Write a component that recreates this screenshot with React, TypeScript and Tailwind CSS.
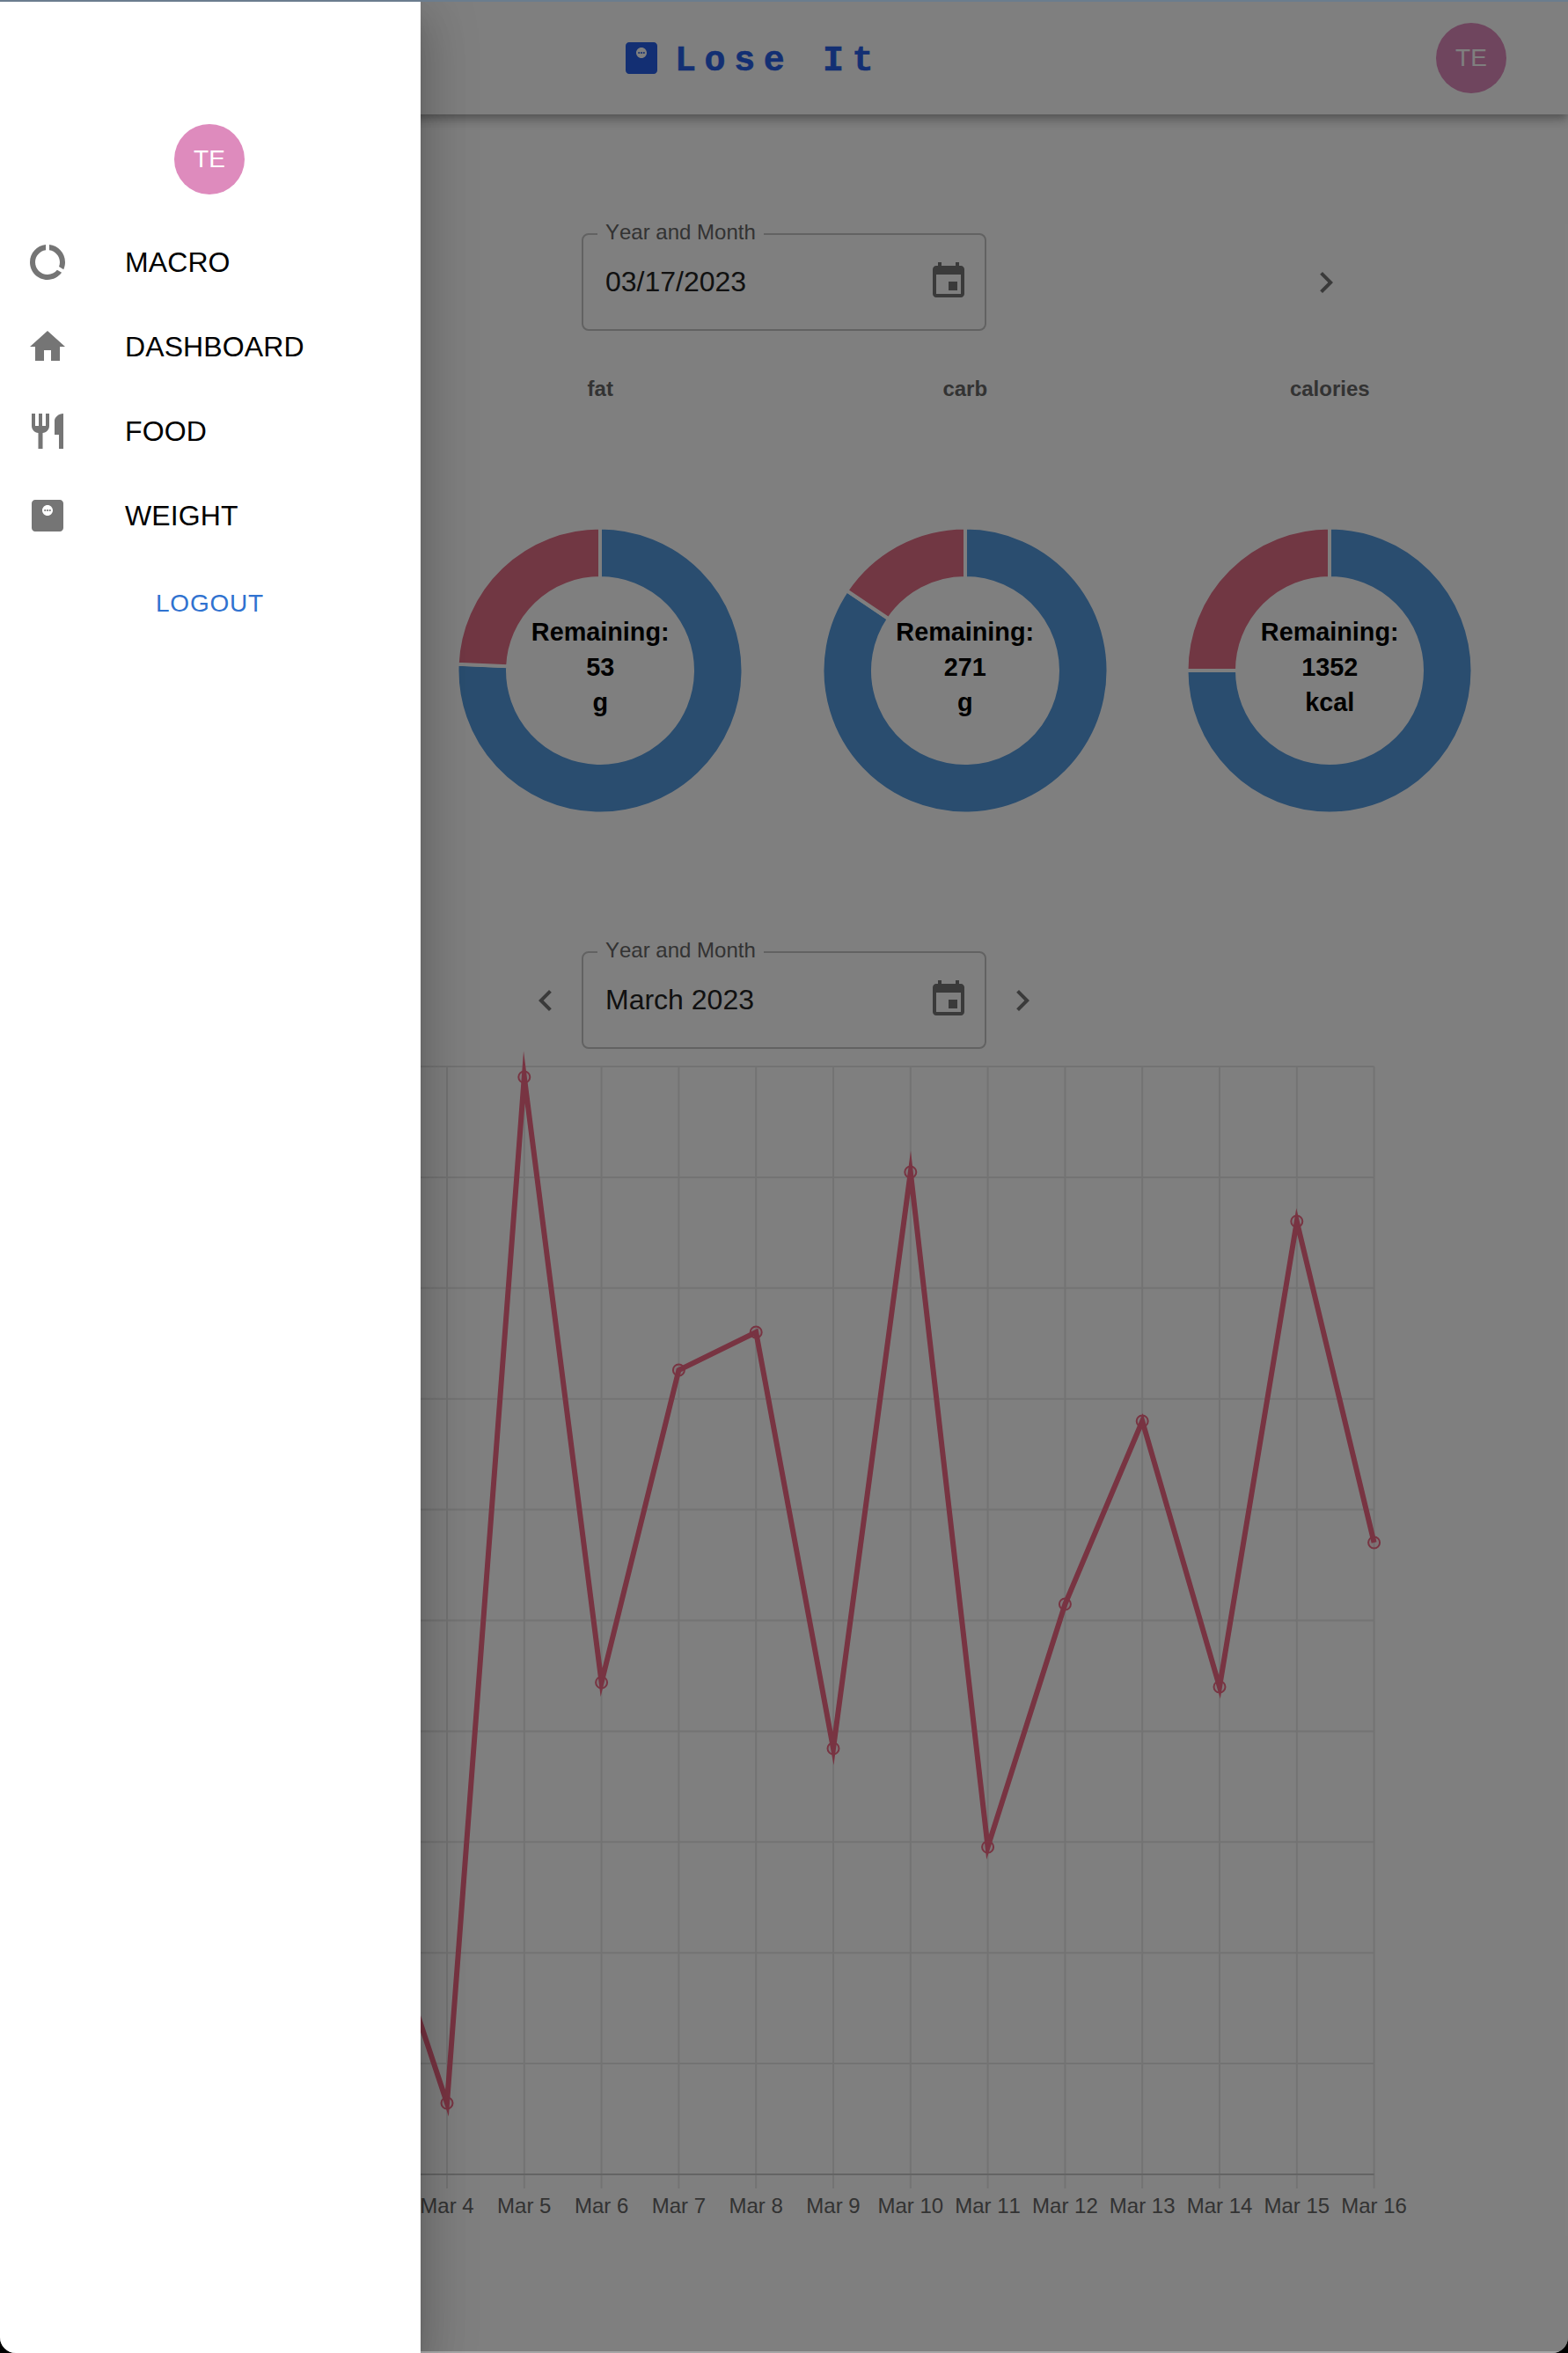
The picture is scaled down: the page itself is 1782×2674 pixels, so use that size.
import React from "react";

const EVENT = "M17 12h-5v5h5v-5zM16 1v2H8V1H6v2H5c-1.11 0-1.99.9-1.99 2L3 19c0 1.1.89 2 2 2h14c1.1 0 2-.9 2-2V5c0-1.1-.9-2-2-2h-1V1h-2zm3 18H5V8h14v11z";
const CHEVRON_R = "M10 6L8.59 7.41 13.17 12l-4.58 4.59L10 18l6-6z";
const CHEVRON_L = "M15.41 7.41L14 6l-6 6 6 6 1.41-1.41L10.83 12z";
const DATA_USAGE = "M13 2.05v3.03c3.39.49 6 3.39 6 6.92 0 .9-.18 1.75-.48 2.54l2.6 1.53c.56-1.24.88-2.62.88-4.07 0-5.18-3.95-9.45-9-9.95zM12 19c-3.87 0-7-3.13-7-7 0-3.53 2.61-6.43 6-6.92V2.05c-5.06.5-9 4.76-9 9.95 0 5.52 4.47 10 9.99 10 3.31 0 6.24-1.61 8.06-4.09l-2.6-1.53C16.17 17.98 14.21 19 12 19z";
const HOME = "M10 20v-6h4v6h5v-8h3L12 3 2 12h3v8z";
const RESTAURANT = "M11 9H9V2H7v7H5V2H3v7c0 2.12 1.66 3.84 3.75 3.97V22h2.5v-9.03C11.34 12.84 13 11.12 13 9V2h-2v7zm5-3v8h2.5v8H21V2c-2.76 0-5 2.24-5 4z";
const WEIGHT = "M5 3h14c1.1 0 2 .9 2 2v14c0 1.1-.9 2-2 2H5c-1.1 0-2-.9-2-2V5c0-1.1.9-2 2-2zm7 3c-1.66 0-3 1.34-3 3s1.34 3 3 3 3-1.34 3-3-1.34-3-3-3z";

function Icon({ d, className }: { d: string; className: string }) {
  return (
    <svg viewBox="0 0 24 24" className={className} fill="currentColor" fillRule="evenodd">
      <path d={d} />
    </svg>
  );
}

function WeightIcon({ className }: { className: string }) {
  return (
    <svg viewBox="0 0 24 24" className={className} fill="currentColor">
      <path d={WEIGHT} fillRule="evenodd" />
      <circle cx="10.6" cy="9" r="0.55" />
      <circle cx="12" cy="9" r="0.55" />
      <circle cx="13.4" cy="9" r="0.55" />
    </svg>
  );
}

function Picker({ value }: { value: string }) {
  return (
    <div className="relative flex h-[111px] w-[460px] shrink-0 items-start justify-between rounded-lg border-2 border-[#c4c4c4] pl-[25px] pr-[17px] pt-[29px]">
      <span className="absolute left-[16px] top-[-17px] bg-white px-[9px] text-[24px] leading-[28px] text-[#666666]">
        Year and Month
      </span>
      <span className="text-[32px] leading-[48px] text-[#222222]">{value}</span>
      <Icon d={EVENT} className="h-12 w-12 text-[#757575]" />
    </div>
  );
}

function polar(r: number, deg: number) {
  const a = (deg * Math.PI) / 180;
  return `${(165 + r * Math.sin(a)).toFixed(2)} ${(165 - r * Math.cos(a)).toFixed(2)}`;
}

function arc(from: number, to: number) {
  const R = 162.5;
  const r = 105;
  const large = to - from > 180 ? 1 : 0;
  return `M${polar(R, from)}A${R} ${R} 0 ${large} 1 ${polar(R, to)}L${polar(r, to)}A${r} ${r} 0 ${large} 0 ${polar(r, from)}Z`;
}

function Donut({ title, value, unit, deg }: { title: string; value: string; unit: string; deg: number }) {
  return (
    <div className="flex w-[414.5px] shrink-0 flex-col items-center">
      <div className="h-[28px] text-[24px] font-bold leading-[28px] text-[#666666]">{title}</div>
      <div className="relative mt-[141px] h-[330px] w-[330px]">
        <svg viewBox="0 0 330 330" className="h-[330px] w-[330px]">
          <path d={arc(0, deg)} fill="#549ade" stroke="#ffffff" strokeWidth="4" />
          <path d={arc(deg, 360)} fill="#e26e86" stroke="#ffffff" strokeWidth="4" />
        </svg>
        <div className="absolute inset-x-0 top-[101px] text-center text-[28.8px] font-bold leading-[40px] text-black">
          <div>Remaining:</div>
          <div>{value}</div>
          <div>{unit}</div>
        </div>
      </div>
    </div>
  );
}

const DAYS = [4, 5, 6, 7, 8, 9, 10, 11, 12, 13, 14, 15, 16];
const XS = DAYS.map((_, i) => 508 + 87.8 * i);
const VALUES = [2390, 1224, 1912, 1557, 1514, 1987, 1332, 2099, 1823, 1615, 1917, 1388, 1753];
const ROWS = [0, 1, 2, 3, 4, 5, 6, 7, 8, 9].map((i) => 1212 + 125.9 * i);

function Chart() {
  const line = "420,2125 " + XS.map((x, i) => `${x},${VALUES[i]}`).join(" ");
  const right = XS[XS.length - 1];
  return (
    <svg viewBox="0 1192 1782 1340" className="block h-[1340px] w-[1782px]">
      {ROWS.map((y) => (
        <line key={y} x1="420" x2={right} y1={y} y2={y} stroke="#e6e6e6" strokeWidth="2" />
      ))}
      {XS.map((x) => (
        <line key={x} x1={x} x2={x} y1="1212" y2="2487" stroke="#e6e6e6" strokeWidth="2" />
      ))}
      <line x1="420" x2={right} y1="2471" y2="2471" stroke="#c8c8c8" strokeWidth="2" />
      <polyline points={line} fill="none" stroke="#f06884" strokeWidth="6" strokeLinejoin="miter" strokeMiterlimit="10" />
      {XS.map((x, i) => (
        <circle key={x} cx={x} cy={VALUES[i]} r="6.5" fill="#f06884" fillOpacity="0.15" stroke="#f06884" strokeWidth="2" />
      ))}
      {XS.map((x, i) => (
        <text key={x} x={x} y="2514.5" textAnchor="middle" fontSize="24" fill="#666666">
          {`Mar ${DAYS[i]}`}
        </text>
      ))}
    </svg>
  );
}

function NavRow({ label, children }: { label: string; children: React.ReactNode }) {
  return (
    <div className="flex h-[96px] items-center pl-[30px]">
      {children}
      <span className="ml-[64px] text-[32px] tracking-[0.1px] text-black">{label}</span>
    </div>
  );
}

export default function App() {
  return (
    <div className="h-[2674px] w-[1782px] overflow-hidden bg-black font-['Liberation_Sans',Arial,sans-serif] [font-kerning:none]">
      <div className="relative h-[2674px] w-[1782px] overflow-hidden rounded-b-[18px] bg-white">
        <header className="flex h-[130px] items-center bg-white pl-[705px] pr-[70px] pt-[2px] shadow-[0_4px_8px_-2px_rgba(0,0,0,0.2),0_8px_10px_0_rgba(0,0,0,0.14),0_2px_20px_0_rgba(0,0,0,0.12)]">
          <WeightIcon className="h-12 w-12 text-[#265ee6]" />
          <span className="ml-[14px] pt-[7px] font-['Liberation_Mono',monospace] text-[40px] font-bold leading-[48px] tracking-[9.6px] text-[#265ee6] [-webkit-text-stroke:0.6px_#265ee6]">
            Lose It
          </span>
          <div className="ml-auto flex h-20 w-20 items-center justify-center rounded-full bg-[#de8bbd] text-[28px] text-white">
            TE
          </div>
        </header>

        <div className="ml-[661px] mt-[135px] flex items-center">
          <Picker value="03/17/2023" />
          <Icon d={CHEVRON_R} className="ml-[362px] h-12 w-12 text-[#757575]" />
        </div>

        <div className="ml-[475px] mt-[52px] flex">
          <Donut title="fat" value="53" unit="g" deg={272.6} />
          <Donut title="carb" value="271" unit="g" deg={304} />
          <Donut title="calories" value="1352" unit="kcal" deg={270} />
        </div>

        <div className="ml-[596px] mt-[154px] flex items-center">
          <Icon d={CHEVRON_L} className="h-12 w-12 text-[#757575]" />
          <div className="ml-[17px]">
            <Picker value="March 2023" />
          </div>
          <Icon d={CHEVRON_R} className="ml-[17px] h-12 w-12 text-[#757575]" />
        </div>

        <Chart />

        <div className="absolute inset-0 bg-black/50" />

        <aside className="absolute inset-y-0 left-0 w-[478px] bg-white pt-[141px] shadow-[0_16px_20px_-10px_rgba(0,0,0,0.2),0_32px_48px_4px_rgba(0,0,0,0.14),0_12px_60px_10px_rgba(0,0,0,0.12)]">
          <div className="ml-[198px] flex h-20 w-20 items-center justify-center rounded-full bg-[#de8bbd] text-[28px] text-white">
            TE
          </div>
          <div className="mt-[29px]">
            <NavRow label="MACRO">
              <Icon d={DATA_USAGE} className="h-12 w-12 text-[#757575]" />
            </NavRow>
            <NavRow label="DASHBOARD">
              <Icon d={HOME} className="h-12 w-12 text-[#757575]" />
            </NavRow>
            <NavRow label="FOOD">
              <Icon d={RESTAURANT} className="h-12 w-12 text-[#757575]" />
            </NavRow>
            <NavRow label="WEIGHT">
              <WeightIcon className="h-12 w-12 text-[#757575]" />
            </NavRow>
          </div>
          <div className="mt-[26px] pr-[1px] text-center text-[28px] leading-[52px] tracking-[0.8px] text-[#2f72d0]">LOGOUT</div>
        </aside>

        <div className="absolute inset-x-0 top-0 h-[2px] bg-[#6b7d8e]" />
        <div className="absolute inset-x-0 bottom-0 h-[2px] bg-white/30" />
      </div>
    </div>
  );
}
